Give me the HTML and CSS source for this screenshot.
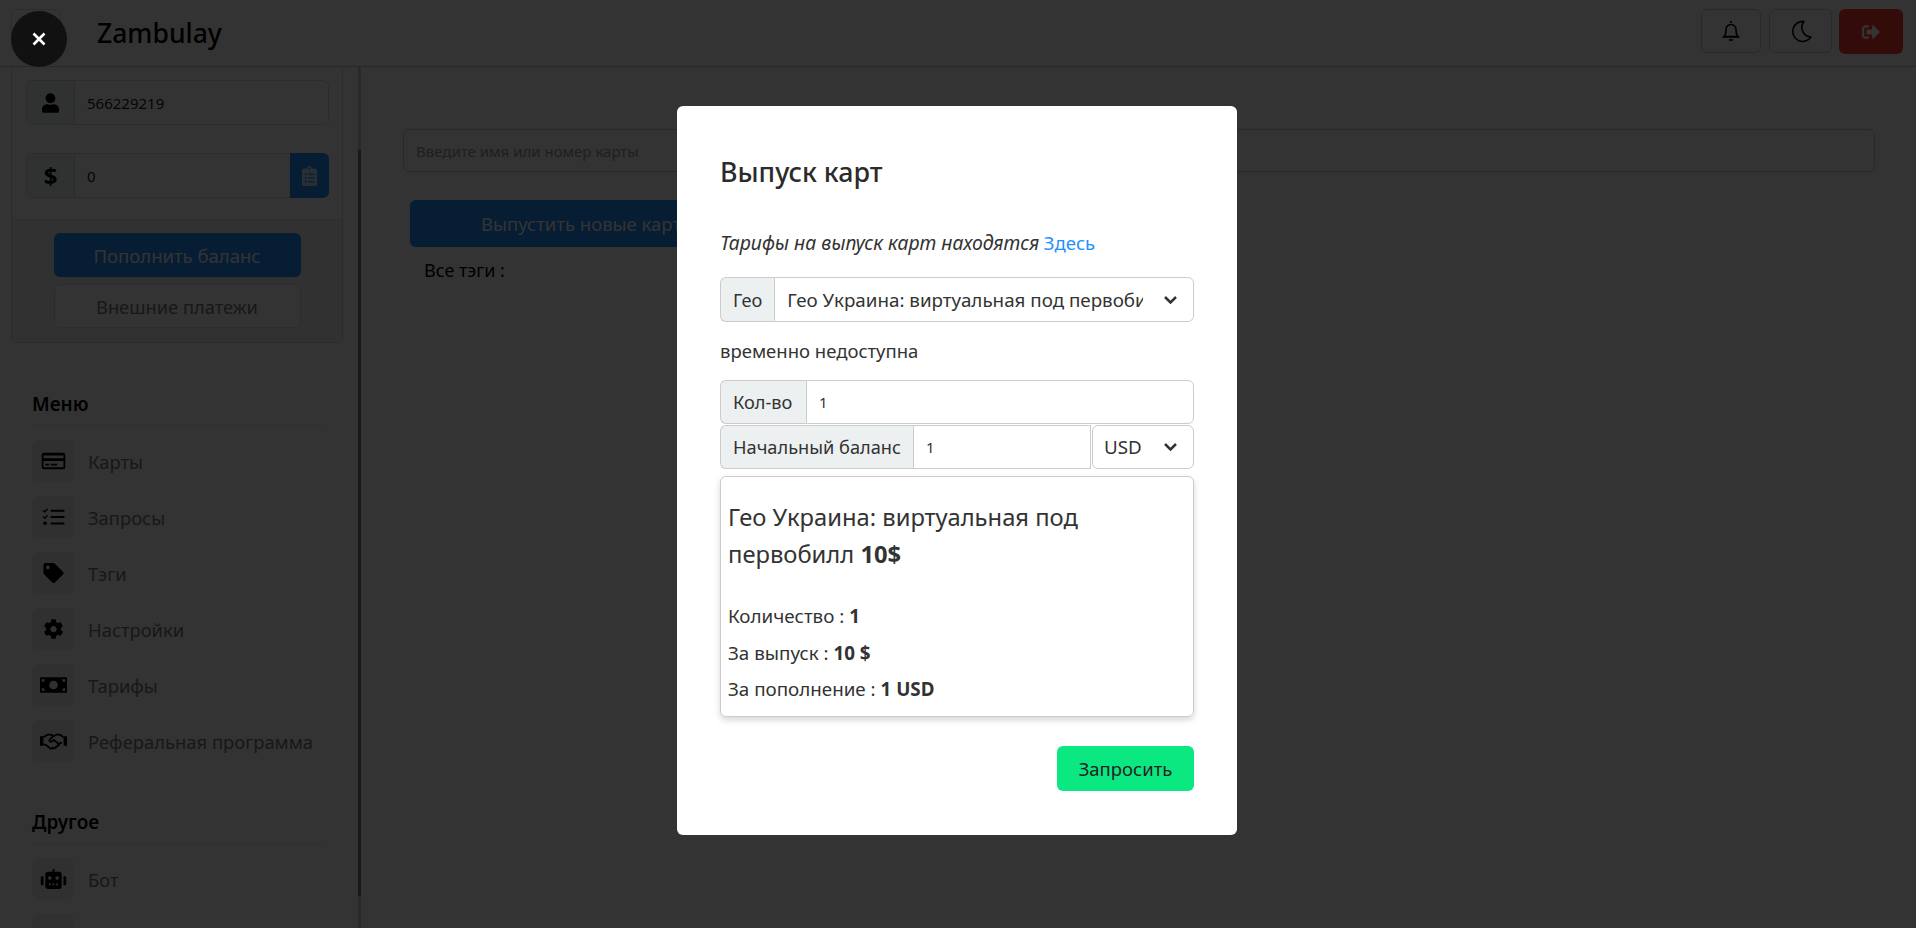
FILE: index.html
```html
<!DOCTYPE html>
<html lang="ru">
<head>
<meta charset="utf-8">
<title>Zambulay</title>
<link rel="stylesheet" href="styles.css">
</head>
<body>
<div class="app">
  <header class="topbar">
    <button class="burger"><svg class="burger-icon" viewBox="0 0 20 16"><path d="M0 1h20v2.400H0zM0 6.800h20v2.400H0zM0 12.600h20V15H0z"/></svg></button>
    <h1 class="brand">Zambulay</h1>
    <div class="top-actions">
      <button class="tool tool-bell"><svg class="tool-icon" viewBox="0 0 24 24"><path d="M12 2v2M5 17.500c1.500-1.500 2-3 2-7a5 5 0 0 1 10 0c0 4 .5 5.500 2 7zM3.500 18h17M10 21h4"/></svg></button>
      <button class="tool tool-moon"><svg class="tool-icon" viewBox="0 0 24 24"><path d="M15 2.500a10 10 0 1 0 7 15.500 9.500 9.500 0 0 1-7-15.500z"/></svg></button>
      <button class="tool-exit"><svg class="exit-icon" viewBox="0 0 512 512"><path d="M497 273L329 441c-15 15-41 4.500-41-17v-96H152c-13.300 0-24-10.700-24-24v-96c0-13.300 10.700-24 24-24h136V88c0-21.400 25.900-32 41-17l168 168c9.300 9.400 9.300 24.600 0 34zM192 436v-40c0-6.600-5.400-12-12-12H96c-17.700 0-32-14.300-32-32V160c0-17.700 14.300-32 32-32h84c6.600 0 12-5.400 12-12V76c0-6.600-5.400-12-12-12H96c-53 0-96 43-96 96v192c0 53 43 96 96 96h84c6.600 0 12-5.400 12-12z"/></svg></button>
    </div>
  </header>
  <div class="workspace">
    <aside class="sidebar">
      <section class="account">
        <div class="account-body">
          <div class="side-group">
            <span class="side-addon"><svg class="addon-icon" viewBox="0 0 448 512"><path d="M224 256c70.700 0 128-57.300 128-128S294.700 0 224 0 96 57.300 96 128s57.300 128 128 128zm89.600 32h-16.700c-22.200 10.200-46.900 16-72.900 16s-50.600-5.800-72.900-16h-16.700C60.200 288 0 348.200 0 422.400V464c0 26.500 21.500 48 48 48h352c26.500 0 48-21.500 48-48v-41.600c0-74.200-60.200-134.400-134.400-134.400z"/></svg></span>
            <input class="side-input" value="566229219">
          </div>
          <div class="side-group">
            <span class="side-addon side-dollar">$</span>
            <input class="side-input" value="0">
            <button class="clip"><svg class="clip-icon" viewBox="0 0 384 512"><path d="M336 64h-80c0-35.300-28.700-64-64-64s-64 28.700-64 64H48C21.500 64 0 85.500 0 112v352c0 26.500 21.500 48 48 48h288c26.500 0 48-21.500 48-48V112c0-26.500-21.500-48-48-48zM96 424c-13.300 0-24-10.700-24-24s10.700-24 24-24 24 10.700 24 24-10.700 24-24 24zm0-96c-13.300 0-24-10.700-24-24s10.700-24 24-24 24 10.700 24 24-10.700 24-24 24zm0-96c-13.300 0-24-10.700-24-24s10.700-24 24-24 24 10.700 24 24-10.700 24-24 24zm96-192c13.300 0 24 10.700 24 24s-10.700 24-24 24-24-10.700-24-24 10.700-24 24-24zm128 368c0 4.400-3.600 8-8 8H168c-4.400 0-8-3.600-8-8v-16c0-4.400 3.600-8 8-8h144c4.400 0 8 3.600 8 8v16zm0-96c0 4.400-3.600 8-8 8H168c-4.400 0-8-3.600-8-8v-16c0-4.400 3.600-8 8-8h144c4.400 0 8 3.600 8 8v16zm0-96c0 4.400-3.600 8-8 8H168c-4.400 0-8-3.600-8-8v-16c0-4.400 3.600-8 8-8h144c4.400 0 8 3.600 8 8v16z"/></svg></button>
          </div>
        </div>
        <div class="account-foot">
          <button class="btn-fund">Пополнить баланс</button>
          <button class="btn-ext">Внешние платежи</button>
        </div>
      </section>
      <nav class="menu">
        <h2 class="menu-title">Меню</h2>
        <a class="menu-item"><span class="menu-box"><svg class="mi" viewBox="0 0 26 22"><path d="M2.500 2h21A2.500 2.500 0 0 1 26 4.500v13a2.500 2.500 0 0 1-2.500 2.500h-21A2.500 2.500 0 0 1 0 17.500v-13A2.500 2.500 0 0 1 2.500 2zM2 5v3h22V5zm0 6v6.500c0 .3.200.5.500.5h21c.3 0 .5-.2.500-.5V11zm2 3h4v2H4zm6 0h7v2h-7z" fill-rule="evenodd"/></svg></span>Карты</a>
        <a class="menu-item"><span class="menu-box"><svg class="mi" viewBox="0 0 24 22"><path d="M9 3h15v2.200H9zM9 10h15v2.200H9zM9 17h15v2.200H9zM1 3l1.500 1.500L5 1.500l1 1-3.500 4L0 4zM1 10l1.500 1.500L5 8.500l1 1-3.500 4L0 11z"/><circle cx="2.700" cy="18" r="2"/></svg></span>Запросы</a>
        <a class="menu-item"><span class="menu-box"><svg class="mi" viewBox="0 0 512 512"><path d="M0 252.118V48C0 21.490 21.490 0 48 0h204.118a48 48 0 0 1 33.941 14.059l211.882 211.882c18.745 18.745 18.745 49.137 0 67.882L293.823 497.941c-18.745 18.745-49.137 18.745-67.882 0L14.059 286.059A48 48 0 0 1 0 252.118zM112 64c-26.510 0-48 21.490-48 48s21.490 48 48 48 48-21.490 48-48-21.490-48-48-48z"/></svg></span>Тэги</a>
        <a class="menu-item"><span class="menu-box"><svg class="mi" viewBox="0 0 512 512"><path d="M487.400 315.700l-42.600-24.600c4.300-23.200 4.300-47 0-70.200l42.600-24.600c4.900-2.800 7.100-8.600 5.500-14-11.100-35.600-30-67.800-54.700-94.600-3.800-4.100-10-5.100-14.800-2.300L380.800 110c-17.900-15.400-38.500-27.300-60.800-35.100V25.800c0-5.600-3.900-10.500-9.400-11.700-36.700-8.200-74.300-7.800-109.200 0-5.500 1.200-9.400 6.100-9.400 11.700V75c-22.200 7.900-42.800 19.800-60.800 35.100L88.700 85.500c-4.900-2.800-11-1.900-14.800 2.300-24.700 26.700-43.600 58.900-54.700 94.600-1.700 5.400.6 11.200 5.500 14L67.300 221c-4.300 23.200-4.300 47 0 70.200l-42.600 24.600c-4.900 2.800-7.100 8.600-5.500 14 11.100 35.600 30 67.800 54.700 94.600 3.800 4.100 10 5.100 14.800 2.300l42.600-24.600c17.900 15.400 38.500 27.300 60.800 35.100v49.200c0 5.600 3.900 10.500 9.400 11.700 36.700 8.200 74.300 7.800 109.200 0 5.500-1.200 9.400-6.100 9.400-11.700v-49.200c22.200-7.900 42.800-19.800 60.800-35.100l42.600 24.600c4.900 2.800 11 1.900 14.800-2.300 24.700-26.700 43.600-58.900 54.700-94.600 1.500-5.500-.7-11.300-5.600-14.100zM256 336c-44.100 0-80-35.900-80-80s35.900-80 80-80 80 35.900 80 80-35.900 80-80 80z"/></svg></span>Настройки</a>
        <a class="menu-item"><span class="menu-box"><svg class="mi mi-wide" viewBox="0 0 28 16"><path fill-rule="evenodd" d="M0 0h28v16H0zM14 3.500a4.500 4.500 0 1 0 0 9 4.500 4.500 0 0 0 0-9zM2 2v3a3 3 0 0 0 3-3zm21 0a3 3 0 0 0 3 3V2zM2 11v3h3a3 3 0 0 0-3-3zm24 0a3 3 0 0 0-3 3h3z"/></svg></span>Тарифы</a>
        <a class="menu-item"><span class="menu-box"><svg class="mi mi-wide" viewBox="0 0 28 18"><path d="M0 4h3.500v10H0zM24.500 4H28v10h-3.500z"/><path class="shake" d="M3.500 5L8 2.500h3.500l2.500 1.500 3-1.500h3.500L24.500 5M3.500 12.500L6 13l4.500 3.500c1 .8 2.500.5 3-.5l1 .5c1 .2 2-.5 2-1.500 1 .2 2-.5 2-1.500 1 .2 2-1 1.500-2l3-.8M14 4l-4 3.500c-1 1 .5 3 2 2l2.500-1.500 6 5"/></svg></span>Реферальная программа</a>
        <h2 class="menu-title menu-title-next">Другое</h2>
        <a class="menu-item"><span class="menu-box"><svg class="mi mi-wide" viewBox="0 0 28 22"><path fill-rule="evenodd" d="M13 0h2v3h5a3 3 0 0 1 3 3v13a3 3 0 0 1-3 3H8a3 3 0 0 1-3-3V6a3 3 0 0 1 3-3h5zM10 8a2 2 0 1 0 0 4 2 2 0 0 0 0-4zm8 0a2 2 0 1 0 0 4 2 2 0 0 0 0-4zM9 16v2h2v-2zm4 0v2h2v-2zm4 0v2h2v-2z"/><path d="M0 9.500C0 8.500.8 8 2 8h1v10H2c-1.200 0-2-.5-2-1.500zM28 9.500C28 8.500 27.200 8 26 8h-1v10h1c1.200 0 2-.5 2-1.500z"/></svg></span>Бот</a>
        <a class="menu-item"><span class="menu-box"></span></a>
      </nav>
      <span class="side-track"><span class="side-thumb"></span></span>
    </aside>
    <main class="content">
      <input class="search" placeholder="Введите имя или номер карты">
      <div class="issue-row"><button class="btn-issue">Выпустить новые карты</button></div>
      <p class="all-tags">Все тэги :</p>
    </main>
  </div>
</div>

<div class="overlay">
  <button class="close-lightbox"><svg class="close-x" viewBox="0 0 16 16"><path d="M2.500 2.500l11 11M13.500 2.500l-11 11"/></svg></button>
  <div class="modal">
    <h3 class="modal-title">Выпуск карт</h3>
    <p class="tariff"><em class="tariff-text">Тарифы на выпуск карт находятся</em> <a class="tariff-link">Здесь</a></p>
    <div class="field geo">
      <span class="label">Гео</span>
      <select class="pick pick-geo"><option>Гео Украина: виртуальная под первобилл 10$</option></select>
    </div>
    <p class="note">временно недоступна</p>
    <div class="field">
      <span class="label label-qty">Кол-во</span>
      <input class="num" value="1">
    </div>
    <div class="field field-balance">
      <span class="label">Начальный баланс</span>
      <input class="num" value="1">
      <select class="pick pick-cur"><option>USD</option></select>
    </div>
    <div class="summary">
      <h4 class="summary-title">Гео Украина: виртуальная под первобилл <b>10$</b></h4>
      <p class="summary-line">Количество : <b>1</b></p>
      <p class="summary-line">За выпуск : <b>10 $</b></p>
      <p class="summary-line">За пополнение : <b>1 USD</b></p>
    </div>
    <div class="modal-foot"><button class="btn-request">Запросить</button></div>
  </div>
</div>
</body>
</html>
```
FILE: styles.css
```css
* { box-sizing: border-box; }
html, body { margin: 0; height: 100%; overflow: hidden; }
body { font-family: "Noto Sans", "Open Sans", sans-serif; color: #333; background: #fff; font-size: 16px; }
button, input, select { font-family: inherit; color: inherit; outline: none; }
button { cursor: pointer; }

.app { height: 928px; display: flex; flex-direction: column; }
.topbar { height: 67px; flex: none; border-bottom: 1px solid #ccc; display: flex; align-items: flex-start; padding: 9px 13px 0 11px; }
.burger { width: 50px; height: 45px; background: #fff; border: 1px solid #ddd; border-radius: 6px; display: flex; align-items: center; justify-content: center; padding: 0; }
.burger-icon { width: 18px; height: 15px; fill: #111; }
.brand { margin: 5px 0 0 36px; font-size: 26.500px; line-height: 38px; font-weight: 500; color: #000; }
.top-actions { margin-left: auto; display: flex; gap: 8px; }
.tool { height: 44px; background: #fff; border: 1px solid #ccc; border-radius: 6px; display: flex; align-items: center; justify-content: center; padding: 0; }
.tool-bell { width: 60px; }
.tool-moon { width: 63px; margin-right: -1px; }
.tool-icon { width: 24px; height: 24px; fill: none; stroke: #000; stroke-width: 1.600; stroke-linejoin: round; }
.tool-exit { width: 64px; height: 45px; background: #ff3f34; border: 0; border-radius: 6px; display: flex; align-items: center; justify-content: center; padding: 0; }
.exit-icon { width: 20px; height: 18px; fill: #fff; }

.workspace { flex: 1; display: flex; min-height: 0; }
.sidebar { width: 361px; flex: none; overflow: hidden; position: relative; padding: 0 18px 0 11px; }
.side-track { position: absolute; right: 0; top: 0; bottom: 0; width: 3px; background: #ccc; }
.side-thumb { position: absolute; left: 0; top: 83px; width: 3px; height: 746px; background: #777; }

.account { border: 1px solid #ddd; border-top: 0; border-radius: 0 0 6px 6px; width: 332px; }
.account-body { padding: 13px 13px 21px 14px; display: flex; flex-direction: column; gap: 28px; }
.side-group { display: flex; height: 45px; border: 1px solid #ddd; border-radius: 6px; }
.side-addon { width: 48px; flex: none; background: #f1f4f4; border-right: 1px solid #ddd; border-radius: 5px 0 0 5px; display: flex; align-items: center; justify-content: center; }
.addon-icon { width: 17px; height: 20px; fill: #000; }
.side-dollar { font-size: 24px; font-weight: 700; color: #000; }
.side-input { flex: 1; min-width: 0; border: 0; background: transparent; padding: 0 12px; font-size: 15px; color: #222; }
.clip { width: 39px; margin: -1px; background: #1e90ff; border: 0; border-radius: 0 6px 6px 0; display: flex; align-items: center; justify-content: center; padding: 0; }
.clip-icon { width: 15px; height: 20px; fill: #fff; opacity: .75; }
.account-foot { padding: 13px 0 14px; background: #eef2f0; border-top: 1px solid #e6e6e6; border-radius: 0 0 6px 6px; display: flex; flex-direction: column; align-items: center; gap: 7px; }
.btn-fund { width: 247px; height: 44px; background: #1e90ff; color: #fff; border: 0; border-radius: 6px; font-size: 18.500px; padding: 0; }
.btn-ext { width: 247px; height: 44px; background: #fff; color: #777; border: 1px solid #ddd; border-radius: 6px; font-size: 18.300px; padding: 0; }

.menu { padding: 43px 21px 0 21px; width: 332px; }
.menu-title { margin: 0 0 14px; font-size: 19px; line-height: 36px; height: 40px; font-weight: 600; color: #000; border-bottom: 1px solid #e9e9e9; }
.menu-title-next { margin-top: 42px; }
.menu-item { display: flex; align-items: center; gap: 14px; height: 42px; margin-bottom: 14px; font-size: 18.400px; color: #777; white-space: nowrap; }
.menu-box { width: 42px; height: 42px; flex: none; background: #eee; border-radius: 8px; display: flex; align-items: center; justify-content: center; }
.mi { width: 25px; height: 20px; fill: #000; }
.mi-wide { width: 27px; height: 20px; }
.shake { fill: none; stroke: #000; stroke-width: 1.800; }

.content { flex: 1; min-width: 0; padding: 62px 41px 0 42px; display: flex; flex-direction: column; align-items: flex-start; }
.search { width: 100%; height: 43px; border: 1px solid #ccc; border-radius: 6px; padding: 0 12px; font-size: 15px; background: #fff; }
.search::placeholder { color: #999; }
.issue-row { margin-top: 28px; padding-left: 7px; }
.btn-issue { width: 356px; height: 47px; background: #1e90ff; color: #fff; border: 0; border-radius: 6px; font-size: 18.500px; padding: 0; }
.all-tags { margin: 10px 0 0 21px; font-size: 18px; line-height: 27px; color: #000; }

.overlay { position: fixed; inset: 0; background: rgba(0, 0, 0, .8); display: flex; justify-content: center; align-items: flex-start; padding: 106px 2px 0 0; }
.close-lightbox { position: absolute; left: 11px; top: 11px; width: 56px; height: 56px; border-radius: 50%; background: #111; border: 0; padding: 0; display: flex; align-items: center; justify-content: center; }
.close-x { width: 16px; height: 16px; fill: none; stroke: #fff; stroke-width: 2.600; }

.modal { width: 560px; height: 729px; background: #fff; border-radius: 6px; padding: 43px; display: flex; flex-direction: column; }
.modal-title { margin: 0; font-size: 26.800px; line-height: 46px; font-weight: 500; color: #2b2b2b; }
.tariff { margin: 35px 0 0; font-size: 18.500px; line-height: 26px; height: 36px; white-space: nowrap; }
.tariff-text { font-size: 19.400px; }
.tariff-link { color: #1e90ff; }
.field { display: flex; height: 44px; flex: none; }
.geo { height: 45px; margin-top: 11px; }
.note { margin: 16px 0 0; font-size: 18.500px; line-height: 26px; height: 42px; }
.field-balance { margin-top: 1px; }
.label { flex: none; display: flex; align-items: center; padding: 0 12px; background: #ecf0f1; border: 1px solid #ccc; border-right: 0; border-radius: 6px 0 0 6px; font-size: 18.200px; white-space: nowrap; }
.label-qty { width: 86px; }
.num { flex: 1; min-width: 0; border: 1px solid #ccc; border-radius: 0 6px 6px 0; padding: 0 12px; font-size: 15px; background: #fff; }
.field-balance .num { border-radius: 0; }
.pick { appearance: none; flex: 1; min-width: 0; border: 1px solid #ccc; border-radius: 0 6px 6px 0; background: #fff url("data:image/svg+xml,%3Csvg xmlns='http://www.w3.org/2000/svg' viewBox='0 0 14 10'%3E%3Cpath d='M1.500 2l5.500 5.500L12.500 2' fill='none' stroke='%23333' stroke-width='2.500'/%3E%3C/svg%3E") no-repeat right 15px center / 15px 10px; font-size: 18.800px; padding: 0 50px 0 12px; }
.pick-cur { flex: none; width: 102px; margin-left: 1px; border-radius: 6px; padding-left: 11px; }
.summary { margin-top: 7px; height: 241px; flex: none; border: 1px solid #ccc; border-radius: 6px; box-shadow: 0 3px 6px rgba(0, 0, 0, .16); padding: 22px 7px 0; }
.summary-title { margin: 0 0 25px; font-size: 23.750px; line-height: 37px; font-weight: 400; }
.summary-title b { font-weight: 700; }
.summary-line { margin: 0; font-size: 18.800px; line-height: 36.500px; }
.summary-line b { font-weight: 700; }
.modal-foot { display: flex; justify-content: flex-end; margin-top: 29px; }
.btn-request { width: 137px; height: 45px; background: #0be881; border: 0; border-radius: 6px; font-size: 18.500px; color: #222; padding: 0; }
```
